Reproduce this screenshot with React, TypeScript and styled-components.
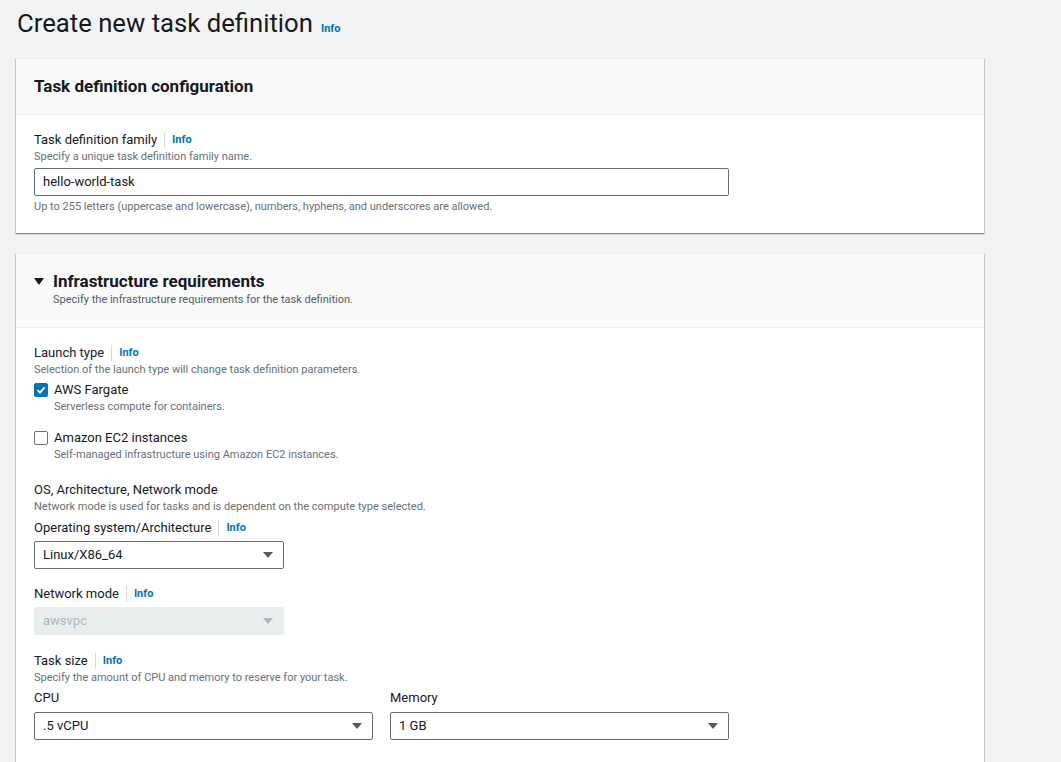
import React from "react";
import styled, { createGlobalStyle } from "styled-components";

const Global = createGlobalStyle`
  html, body { margin: 0; padding: 0; background: #f2f3f3; }
  body {
    font-family: Roboto, "Liberation Sans", Arial, sans-serif;
    color: #16191f;
    -webkit-font-smoothing: antialiased;
  }
  * { box-sizing: border-box; }
`;

const Page = styled.div`
  padding: 5px 77px 0 16px;
  display: flex;
  flex-direction: column;
`;

const TitleRow = styled.div`
  display: flex;
  align-items: baseline;
  gap: 8px;
  padding-left: 1px;
  margin-bottom: 17px;
`;

const H1 = styled.h1`
  margin: 0;
  font-size: 25.7px;
  line-height: 36px;
  font-weight: 400;
`;

const InfoLink = styled.a`
  font-size: 11px;
  font-weight: 700;
  color: #0073bb;
  text-decoration: none;
  line-height: 18px;
`;

const Card = styled.section<{ $mb?: number }>`
  background: #fff;
  box-shadow: 0 1px 1px 0 rgba(0, 28, 36, 0.3), 1px 1px 1px 0 rgba(0, 28, 36, 0.15),
    -1px 1px 1px 0 rgba(0, 28, 36, 0.15);
  border-top: 1px solid #eaeded;
  margin-bottom: ${(p) => p.$mb ?? 0}px;
`;

const CardHeader = styled.div<{ $pt: number; $pb: number }>`
  background: #fafafa;
  border-bottom: 1px solid #eaeded;
  padding: ${(p) => p.$pt}px 20px ${(p) => p.$pb}px 18px;
`;

const H2 = styled.h2`
  margin: 0;
  font-size: 17px;
  line-height: 22px;
  font-weight: 700;
  display: flex;
  align-items: center;
  gap: 9px;
`;

const Caret = styled.span`
  width: 0;
  height: 0;
  border-left: 5px solid transparent;
  border-right: 5px solid transparent;
  border-top: 7px solid #16191f;
  margin-top: 1px;
`;

const HeaderDesc = styled.div`
  font-size: 11px;
  line-height: 16px;
  color: #545b64;
  padding-left: 19px;
`;

const CardBody = styled.div<{ $pt: number; $pb: number }>`
  padding: ${(p) => p.$pt}px 20px ${(p) => p.$pb}px 18px;
  display: flex;
  flex-direction: column;
`;

const LabelRow = styled.div<{ $mt?: number }>`
  display: flex;
  align-items: center;
  font-size: 13px;
  line-height: 18px;
  margin-top: ${(p) => p.$mt ?? 0}px;
`;

const Sep = styled.span`
  width: 1px;
  height: 16px;
  background: #d5dbdb;
  margin: 0 7px 0 7px;
`;

const Desc = styled.div<{ $mt?: number; $indent?: number }>`
  font-size: 11px;
  line-height: 16px;
  color: #687078;
  margin-top: ${(p) => p.$mt ?? 0}px;
  padding-left: ${(p) => p.$indent ?? 0}px;
`;

const Input = styled.div<{ $mt: number }>`
  width: 695px;
  height: 28px;
  border: 1px solid #687078;
  border-radius: 2px;
  padding: 0 8px;
  font-size: 13px;
  line-height: 26px;
  margin-top: ${(p) => p.$mt}px;
`;

const Select = styled.div<{ $w: number; $mt: number; $disabled?: boolean }>`
  width: ${(p) => p.$w}px;
  height: 28px;
  border: 1px solid ${(p) => (p.$disabled ? "#eaeded" : "#687078")};
  background: ${(p) => (p.$disabled ? "#eaeded" : "#fff")};
  color: ${(p) => (p.$disabled ? "#aab7b8" : "#16191f")};
  border-radius: 2px;
  padding: 0 10px 0 8px;
  font-size: 13px;
  line-height: 26px;
  margin-top: ${(p) => p.$mt}px;
  display: flex;
  align-items: center;
  justify-content: space-between;
`;

const Arrow = styled.span<{ $disabled?: boolean }>`
  width: 0;
  height: 0;
  border-left: 5px solid transparent;
  border-right: 5px solid transparent;
  border-top: 6px solid ${(p) => (p.$disabled ? "#aab7b8" : "#545b64")};
`;

const CheckRow = styled.label<{ $mt: number }>`
  display: flex;
  align-items: center;
  gap: 6px;
  font-size: 13px;
  line-height: 18px;
  margin-top: ${(p) => p.$mt}px;
`;

const Box = styled.span<{ $checked?: boolean }>`
  width: 14px;
  height: 14px;
  border-radius: 2px;
  border: 1px solid ${(p) => (p.$checked ? "#0073bb" : "#687078")};
  background: ${(p) => (p.$checked ? "#0073bb" : "#fff")};
  display: flex;
  align-items: center;
  justify-content: center;
`;

const TwoCols = styled.div`
  display: grid;
  grid-template-columns: 339px 339px;
  column-gap: 17px;
  margin-top: 3px;
`;

const Col = styled.div`
  display: flex;
  flex-direction: column;
`;

const Label = ({ text, info, mt }: { text: string; info?: boolean; mt?: number }) => (
  <LabelRow $mt={mt}>
    <span>{text}</span>
    {info && (
      <>
        <Sep />
        <InfoLink>Info</InfoLink>
      </>
    )}
  </LabelRow>
);

const Check = ({ checked }: { checked?: boolean }) => (
  <Box $checked={checked}>
    {checked && (
      <svg width="10" height="10" viewBox="0 0 10 10">
        <path d="M1.5 5.2 L4 7.6 L8.6 2.4" fill="none" stroke="#fff" strokeWidth="1.8" />
      </svg>
    )}
  </Box>
);

export default function App() {
  return (
    <>
      <Global />
      <Page>
        <TitleRow>
          <H1>Create new task definition</H1>
          <InfoLink>Info</InfoLink>
        </TitleRow>

        <Card $mb={20}>
          <CardHeader $pt={16} $pb={17}>
            <H2>Task definition configuration</H2>
          </CardHeader>
          <CardBody $pt={16} $pb={18}>
            <Label text="Task definition family" info />
            <Desc>Specify a unique task definition family name.</Desc>
            <Input $mt={3}>hello-world-task</Input>
            <Desc $mt={3}>
              Up to 255 letters (uppercase and lowercase), numbers, hyphens, and underscores are allowed.
            </Desc>
          </CardBody>
        </Card>

        <Card>
          <CardHeader $pt={16} $pb={19}>
            <H2>
              <Caret />
              Infrastructure requirements
            </H2>
            <HeaderDesc>Specify the infrastructure requirements for the task definition.</HeaderDesc>
          </CardHeader>
          <CardBody $pt={16} $pb={40}>
            <Label text="Launch type" info />
            <Desc>Selection of the launch type will change task definition parameters.</Desc>
            <CheckRow $mt={3}>
              <Check checked />
              AWS Fargate
            </CheckRow>
            <Desc $indent={20}>Serverless compute for containers.</Desc>
            <CheckRow $mt={14}>
              <Check />
              Amazon EC2 instances
            </CheckRow>
            <Desc $indent={20}>Self-managed infrastructure using Amazon EC2 instances.</Desc>

            <Label text="OS, Architecture, Network mode" mt={18} />
            <Desc>Network mode is used for tasks and is dependent on the compute type selected.</Desc>
            <Label text="Operating system/Architecture" info mt={4} />
            <Select $w={250} $mt={4}>
              <span>Linux/X86_64</span>
              <Arrow />
            </Select>
            <Label text="Network mode" info mt={16} />
            <Select $w={250} $mt={4} $disabled>
              <span>awsvpc</span>
              <Arrow $disabled />
            </Select>

            <Label text="Task size" info mt={17} />
            <Desc>Specify the amount of CPU and memory to reserve for your task.</Desc>
            <TwoCols>
              <Col>
                <Label text="CPU" />
                <Select $w={339} $mt={5}>
                  <span>.5 vCPU</span>
                  <Arrow />
                </Select>
              </Col>
              <Col>
                <Label text="Memory" />
                <Select $w={339} $mt={5}>
                  <span>1 GB</span>
                  <Arrow />
                </Select>
              </Col>
            </TwoCols>
          </CardBody>
        </Card>
      </Page>
    </>
  );
}
